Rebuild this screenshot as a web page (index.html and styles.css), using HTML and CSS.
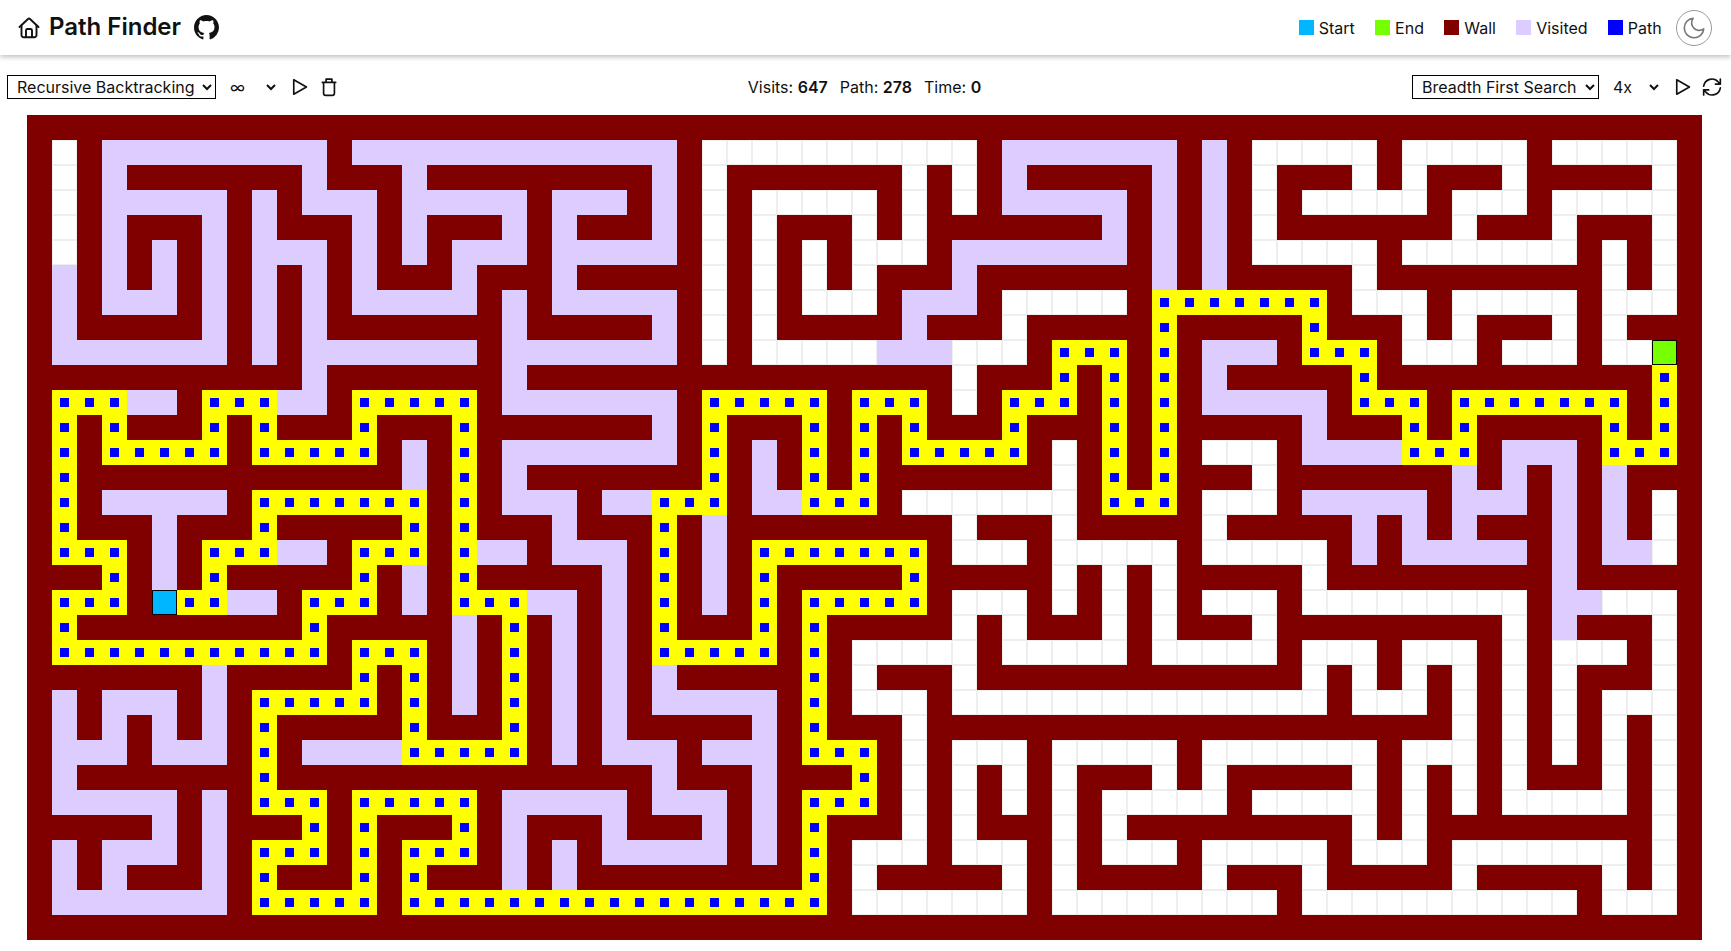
FILE: index.html
```html
<!DOCTYPE html>
<html lang="en">
<head>
<meta charset="utf-8">
<title>Path Finder</title>
<link rel="stylesheet" href="styles.css">
</head>
<body>
<header class="topbar">
  <div class="brand">
    <svg class="icon-home" viewBox="0 0 24 24" fill="none" stroke="currentColor" stroke-width="1.9" stroke-linecap="round" stroke-linejoin="round"><path d="M2.500 11 11 3a1.500 1.500 0 0 1 2 0l8.500 8"/><path d="M4.500 9.500V19a2.200 2.200 0 0 0 2.200 2.200h10.600a2.200 2.200 0 0 0 2.200-2.200V9.500"/><path d="M9 21v-6.500a1.500 1.500 0 0 1 1.500-1.500h3a1.500 1.500 0 0 1 1.500 1.500V21"/></svg>
    <h1 class="title">Path Finder</h1>
    <svg class="icon-github" viewBox="0 0 16 16" fill="currentColor"><path d="M8 0C3.58 0 0 3.58 0 8c0 3.54 2.29 6.53 5.47 7.59.4.07.55-.17.55-.38 0-.19-.01-.82-.01-1.49-2.01.37-2.53-.49-2.69-.94-.09-.23-.48-.94-.82-1.13-.28-.15-.68-.52-.01-.53.63-.01 1.08.58 1.23.82.72 1.21 1.87.87 2.33.66.07-.52.28-.87.51-1.07-1.78-.2-3.64-.89-3.64-3.95 0-.87.31-1.59.82-2.15-.08-.2-.36-1.02.08-2.12 0 0 .67-.21 2.2.82.64-.18 1.32-.27 2-.27s1.36.09 2 .27c1.53-1.04 2.2-.82 2.2-.82.44 1.1.16 1.92.08 2.12.51.56.82 1.27.82 2.15 0 3.07-1.87 3.75-3.65 3.95.29.25.54.73.54 1.48 0 1.07-.01 1.93-.01 2.2 0 .21.15.46.55.38A8.01 8.01 0 0 0 16 8c0-4.42-3.58-8-8-8z"/></svg>
  </div>
  <div class="legend">
    <span class="legend-item"><i class="swatch swatch-start"></i>Start</span>
    <span class="legend-item"><i class="swatch swatch-end"></i>End</span>
    <span class="legend-item"><i class="swatch swatch-wall"></i>Wall</span>
    <span class="legend-item"><i class="swatch swatch-visited"></i>Visited</span>
    <span class="legend-item"><i class="swatch swatch-path"></i>Path</span>
    <button class="theme-toggle" type="button" aria-label="Toggle theme">
      <svg viewBox="0 0 24 24" fill="none" stroke="currentColor" stroke-width="1.5" stroke-linecap="round" stroke-linejoin="round"><path d="M21 12.800A9 9 0 1 1 11.200 3a7 7 0 0 0 9.800 9.800z"/></svg>
    </button>
  </div>
</header>
<section class="toolbar">
  <div class="controls">
    <select class="algo"><option>Recursive Backtracking</option></select>
    <select class="speed speed-left"><option>∞</option></select>
    <svg class="tool tool-play" viewBox="0 0 24 24" fill="none" stroke="currentColor" stroke-width="2" stroke-linejoin="round"><path d="M3.300 3.300v17.400L18.500 12z"/></svg>
    <svg class="tool" viewBox="0 0 24 24" fill="none" stroke="currentColor" stroke-width="2" stroke-linecap="round" stroke-linejoin="round"><path d="M4 6.500h16M8.500 6.500V2.500h7v4M5.500 6.500V19.500a2.500 2.500 0 0 0 2.500 2.500h8a2.500 2.500 0 0 0 2.500-2.500V6.500"/></svg>
  </div>
  <div class="stats">
    <span>Visits: <b>647</b></span>
    <span>Path: <b>278</b></span>
    <span>Time: <b>0</b></span>
  </div>
  <div class="controls">
    <select class="algo algo-right"><option>Breadth First Search</option></select>
    <select class="speed speed-right"><option>4x</option></select>
    <svg class="tool tool-play-right" viewBox="0 0 24 24" fill="none" stroke="currentColor" stroke-width="2" stroke-linejoin="round"><path d="M3.300 3.300v17.400L18.500 12z"/></svg>
    <svg class="tool" viewBox="0 0 24 24" fill="none" stroke="currentColor" stroke-width="2" stroke-linecap="round" stroke-linejoin="round"><path d="M2 11a10 10 0 0 1 17.500-5L22 8.500M22 2.500v6h-6M22 13a10 10 0 0 1-17.500 5L2 15.500M2 21.500v-6h6"/></svg>
  </div>
</section>
<main class="board-wrap">
  <div class="board" id="board"></div>
</main>
<script src="script.js"></script>
</body>
</html>
```
FILE: styles.css
```css
* { box-sizing: border-box; }
html, body { margin: 0; padding: 0; }
body {
  font-family: Inter, "Liberation Sans", sans-serif;
  font-size: 16px;
  color: #111;
  background: #fff;
  overflow: hidden;
  height: 951px;
}
.topbar {
  height: 55px;
  display: flex;
  align-items: center;
  justify-content: space-between;
  padding: 0 19px 0 17px;
  box-shadow: 0 2px 5px rgba(0, 0, 0, 0.25);
}
.brand { display: flex; align-items: center; }
.icon-home { width: 24px; height: 24px; color: #111; }
.title { margin: 0 0 2px 8px; font-size: 24px; font-weight: 600; line-height: 32px; }
.icon-github { width: 25px; height: 25px; margin-left: 13px; color: #111; }
.legend { display: flex; align-items: center; }
.legend-item { display: flex; align-items: center; margin-right: 20.250px; }
.swatch { width: 15px; height: 15px; margin-right: 5px; display: block; }
.swatch-start { background: #00b7ff; }
.swatch-end { background: #76ff00; }
.swatch-wall { background: #800000; }
.swatch-visited { background: #ddcdff; }
.swatch-path { background: #0000ff; }
.theme-toggle {
  width: 36px;
  height: 36px;
  padding: 4px;
  margin-left: -6px;
  border: 1px solid #999;
  border-radius: 50%;
  background: #fff;
  color: #777;
  display: flex;
}
.theme-toggle svg { width: 100%; height: 100%; }
.toolbar {
  height: 60px;
  display: grid;
  grid-template-columns: 1fr auto 1fr;
  align-items: center;
  padding: 4px 9px 0 7px;
}
.toolbar .controls:last-child { justify-content: flex-end; }
.controls { display: flex; align-items: center; }
.stats { display: flex; gap: 12px; }
.stats b { font-weight: 600; }
select {
  font: inherit;
  color: #111;
  background: #fff;
  height: 24px;
  padding: 0;
}
.algo { border: 1px solid #000; padding: 0 0 0 5px; width: 209px; }
.algo-right { width: 187px; }
.speed { border: 0; width: 54px; padding-left: 1px; }
.speed-left { margin-left: 9px; }
.speed-right { margin-left: 9px; }
.tool { width: 20px; height: 20px; margin-left: 8px; color: #111; flex: none; }
.tool-play { margin-left: 12px; }
.tool-play-right { margin-left: 12px; }
.board-wrap { display: flex; justify-content: flex-start; padding-left: 27px; }
.board {
  display: grid;
  grid-template-columns: repeat(67, 25px);
  grid-auto-rows: 25px;
  width: 1675px;
}
.cell { border: 1px solid #eee; background: #fff; }
.cell-wall { border: 0; background: #800000; }
.cell-visited { border: 0; background: #ddcdff; }
.cell-path { border: 0; background: #ff0; display: flex; align-items: center; justify-content: center; }
.cell-path::after { content: ""; width: 9px; height: 9px; background: #00f; }
.cell-start { border: 1px solid #000; background: #00b7ff; }
.cell-end { border: 1px solid #000; background: #76ff00; }
```
FILE: script.js
```js
const ROWS = [
"###################################################################",
"#.#vvvvvvvvv#vvvvvvvvvvvvv#...........#vvvvvvv#v#.....#.....#.....#",
"#.#v#######v###v#########v#.#######.#.#v#####v#v#.###.#.###.#####.#",
"#.#vvvvv#v#vvv#vvvvv#vvv#v#.#.....#.#.#vvvvv#v#v#.#.....#...#.....#",
"#.#v###v#v###v#v###v#v###v#.#.###.#.#######v#v#v#.#######.###.###.#",
"#.#v#v#v#vvv#v#v#vvv#vvvvv#.#.#.#...#vvvvvvv#v#v#.....#.......#.#.#",
"#v#v#v#v#v#v#v###v###v#####.#.#.#.###v#######v#v#####.#########.#.#",
"#v#vvv#v#v#v#vvvvv#v#vvvvv#.#.#...#vvv#.....#ppppppp#...#.....#...#",
"#v#####v#v#v#######v#####v#.#.#####v###.#####p#####p###.#.###.#.###",
"#vvvvvvv#v#vvvvvvv#vvvvvvv#.#.....vvv...#ppp#p#vvv#ppp#...#...#..E#",
"###########v#######v#################.###p#p#p#v#####p###########p#",
"#pppvv#pppvv#ppppp#vvvvvvv#ppppp#ppp#.#ppp#p#p#vvvvv#ppp#ppppppp#p#",
"#p#p###p#p###p###p#######v#p###p#p#p###p###p#p#####v###p#p#####p#p#",
"#p#ppppp#ppppp#v#p#vvvvvvv#p#v#p#p#ppppp#.#p#p#...#vvvvppp#vvv#ppp#",
"#p#############v#p#v#######p#v#p#p#######.#p#p###.#######v#v#v#v###",
"#p#vvvvv#ppppppp#p#vvv#vvppp#vvppp#.......#ppp#...#vvvvv#vvv#v#v#.#",
"#p###v###p#####p#p###v###p#v#########.###.#####.#####v#v#v###v#v#.#",
"#ppp#v#pppvv#ppp#pvv#vvv#p#v#ppppppp#...#.....#.....#v#vvvvv#v#vv.#",
"###p#v#p#####p#v#p#####v#p#v#p#####p#####.#.#.#####.#########v#####",
"#ppp#Sppvv#ppp#v#pppvv#v#p#v#p#ppppp#...#.#.#.#...#.........#vv...#",
"#p#########p#####v#p#v#v#p###p#p#####.#.###.#.###.#########.#v###.#",
"#ppppppppppp#ppp#v#p#v#v#ppppp#p#.....#.....#.....#...#...#.#...#.#",
"#######v#####p#p#v#p#v#v#v#####p#.###.#############.#.#.#.#.#.###.#",
"#v#vvv#v#ppppp#p#v#p#v#v#vvvvv#p#...#...............#...#.#.#.#...#",
"#v#v#v#v#p#####p###p#v#v#####v#p###.#####################.#.#.#.#.#",
"#vvv#vvv#p#vvvvppppp#v#vvv#vvv#ppp#.#...#.....#.......#...#.#.#.#.#",
"#v#######p###############v###v###p#.#.#.#.###.#.#####.#.#.#.###.#.#",
"#vvvvv#v#ppp#ppppp#vvvvv#vvv#v#ppp#.#.#.#.#.....#.....#.#.#.....#.#",
"#####v#v###p#p###p#v###v###v#v#p###.#.###.#.#########.#.#########.#",
"#v#vvv#v#ppp#p#ppp#v#v#vvvvv#v#p#...#...#.#...#.....#...#.......#.#",
"#v#v###v#p###p#p###v#v#########p#.#####.#.#####.###.#####.#####.#.#",
"#vvvvvvv#ppppp#ppppppppppppppppp#.......#.........#...........#...#",
"###################################################################"
];
const KINDS = { "#": "cell-wall", v: "cell-visited", p: "cell-path", S: "cell-start", E: "cell-end", ".": "" };
const board = document.getElementById("board");
for (const row of ROWS) {
  const line = row.padEnd(67, "#");
  for (const ch of line) {
    const cell = document.createElement("div");
    cell.className = ("cell " + KINDS[ch]).trim();
    board.appendChild(cell);
  }
}
```
